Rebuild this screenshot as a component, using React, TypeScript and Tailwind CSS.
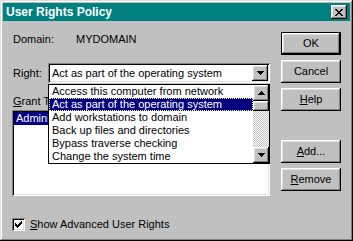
import React from 'react'

const raised =
  'shadow-[inset_-1px_-1px_#000,inset_1px_1px_#fff,inset_-2px_-2px_#808080,inset_2px_2px_#dfdfdf]'
const sunken =
  'shadow-[inset_1px_1px_#808080,inset_-1px_-1px_#fff,inset_2px_2px_#000,inset_-2px_-2px_#dfdfdf]'

// pixel glyphs, drawn row by row
function Pixels({ rows, className = '' }: { rows: string[]; className?: string }) {
  const w = rows[0].length
  const h = rows.length
  return (
    <svg width={w} height={h} viewBox={`0 0 ${w} ${h}`} shapeRendering="crispEdges" className={className}>
      {rows.map((r, y) =>
        r.split('').map((c, x) => (c === 'X' ? <rect key={`${x}-${y}`} x={x} y={y} width={1} height={1} fill="#000" /> : null)),
      )}
    </svg>
  )
}

const closeGlyph = ['XX....XX', '.XX..XX.', '..XXXX..', '...XX...', '..XXXX..', '.XX..XX.', 'XX....XX']
const downGlyph = ['XXXXXXX', '.XXXXX.', '..XXX..', '...X...']
const upGlyph = ['...X...', '..XXX..', '.XXXXX.', 'XXXXXXX']
const checkGlyph = ['......X', '.....XX', 'X...XXX', 'XX.XXX.', 'XXXXX..', '.XXX...', '..X....']

function Btn({ children, isDefault }: { children: React.ReactNode; isDefault?: boolean }) {
  return (
    <div className={`h-[23px] w-[60px] ${isDefault ? 'border border-black' : ''}`}>
      <div className={`flex h-full w-full items-center justify-center bg-[#c0c0c0] text-[11px] text-black ${raised}`}>
        {children}
      </div>
    </div>
  )
}

const rights = [
  'Access this computer from network',
  'Act as part of the operating system',
  'Add workstations to domain',
  'Back up files and directories',
  'Bypass traverse checking',
  'Change the system time',
]

export default function App() {
  return (
    <div
      className={`flex h-[241px] w-[353px] flex-col bg-[#c0c0c0] p-[3px] font-['Liberation_Sans',Arial,sans-serif] text-[11px] text-black shadow-[inset_-1px_-1px_#000,inset_1px_1px_#dfdfdf,inset_-2px_-2px_#808080,inset_2px_2px_#fff]`}
    >
      {/* title bar */}
      <div className="flex h-[18px] items-center bg-[#008080] pl-[3px] pr-[3px]">
        <span className="flex-1 text-[12px] font-bold leading-none text-white">User Rights Policy</span>
        <div className={`flex h-[14px] w-[16px] items-center justify-center bg-[#c0c0c0] ${raised}`}>
          <Pixels rows={closeGlyph} />
        </div>
      </div>

      <div className="flex flex-1 px-[9px]">
        {/* left column */}
        <div className="flex w-[258px] flex-col">
          <div className="mt-[12px] flex h-[13px] items-center leading-[13px]">
            <span className="w-[64px] pl-[1px]">Domain:</span>
            <span>MYDOMAIN</span>
          </div>

          <div className="mt-[17px] flex h-[20px] items-center">
            <span className="w-[36px] pl-[1px]">
              Ri<span className="underline">g</span>ht:
            </span>
            <div className={`relative flex h-[20px] w-[222px] items-center bg-white p-[2px] ${sunken}`}>
              <span className="flex-1 pl-[2px] leading-[16px]">Act as part of the operating system</span>
              <div className={`flex h-[16px] w-[16px] items-center justify-center bg-[#c0c0c0] ${raised}`}>
                <Pixels rows={downGlyph} />
              </div>

              {/* dropped list */}
              <div className="absolute left-0 top-[21px] z-10 flex h-[80px] w-[222px] border border-black bg-white">
                <div className="flex flex-1 flex-col">
                  {rights.map((r, i) => (
                    <div
                      key={r}
                      className={`h-[13px] pl-[3px] leading-[13px] ${
                        i === 1 ? 'bg-[#000080] text-white outline-1 -outline-offset-1 outline-dotted outline-[#ffff80]' : ''
                      }`}
                    >
                      {r}
                    </div>
                  ))}
                </div>
                <div className="flex w-[16px] flex-col">
                  <div className={`flex h-[16px] items-center justify-center bg-[#c0c0c0] ${raised}`}>
                    <Pixels rows={upGlyph} />
                  </div>
                  <div className="flex flex-1 flex-col bg-[conic-gradient(#fff_25%,#c0c0c0_0_50%,#fff_0_75%,#c0c0c0_0)] bg-[length:2px_2px]">
                    <div className={`h-[10px] bg-[#c0c0c0] ${raised}`} />
                  </div>
                  <div className={`flex h-[16px] items-center justify-center bg-[#c0c0c0] ${raised}`}>
                    <Pixels rows={downGlyph} />
                  </div>
                </div>
              </div>
            </div>
          </div>

          <div className="mt-[12px] h-[13px] pl-[1px] leading-[13px]">
            <span className="underline">G</span>rant To:
          </div>

          <div className={`mt-[2px] h-[86px] bg-white p-[2px] ${sunken}`}>
            <div className="h-[13px] bg-[#000080] pl-[2px] leading-[13px] text-white">Administrators</div>
          </div>

          <div className="mt-[22px] flex h-[13px] items-center">
            <div className={`flex h-[13px] w-[13px] items-center justify-center bg-white ${sunken}`}>
              <Pixels rows={checkGlyph} />
            </div>
            <span className="ml-[5px] leading-[13px]">
              <span className="underline">S</span>how Advanced User Rights
            </span>
          </div>
        </div>

        {/* right column */}
        <div className="ml-[11px] flex w-[60px] flex-col">
          <div className="mt-[11px]">
            <Btn isDefault>OK</Btn>
          </div>
          <div className="mt-[5px]">
            <Btn>Cancel</Btn>
          </div>
          <div className="mt-[5px]">
            <Btn>
              <span className="underline">H</span>elp
            </Btn>
          </div>
          <div className="mt-[29px]">
            <Btn>
              <span className="underline">A</span>dd...
            </Btn>
          </div>
          <div className="mt-[5px]">
            <Btn>
              <span className="underline">R</span>emove
            </Btn>
          </div>
        </div>
      </div>
    </div>
  )
}
